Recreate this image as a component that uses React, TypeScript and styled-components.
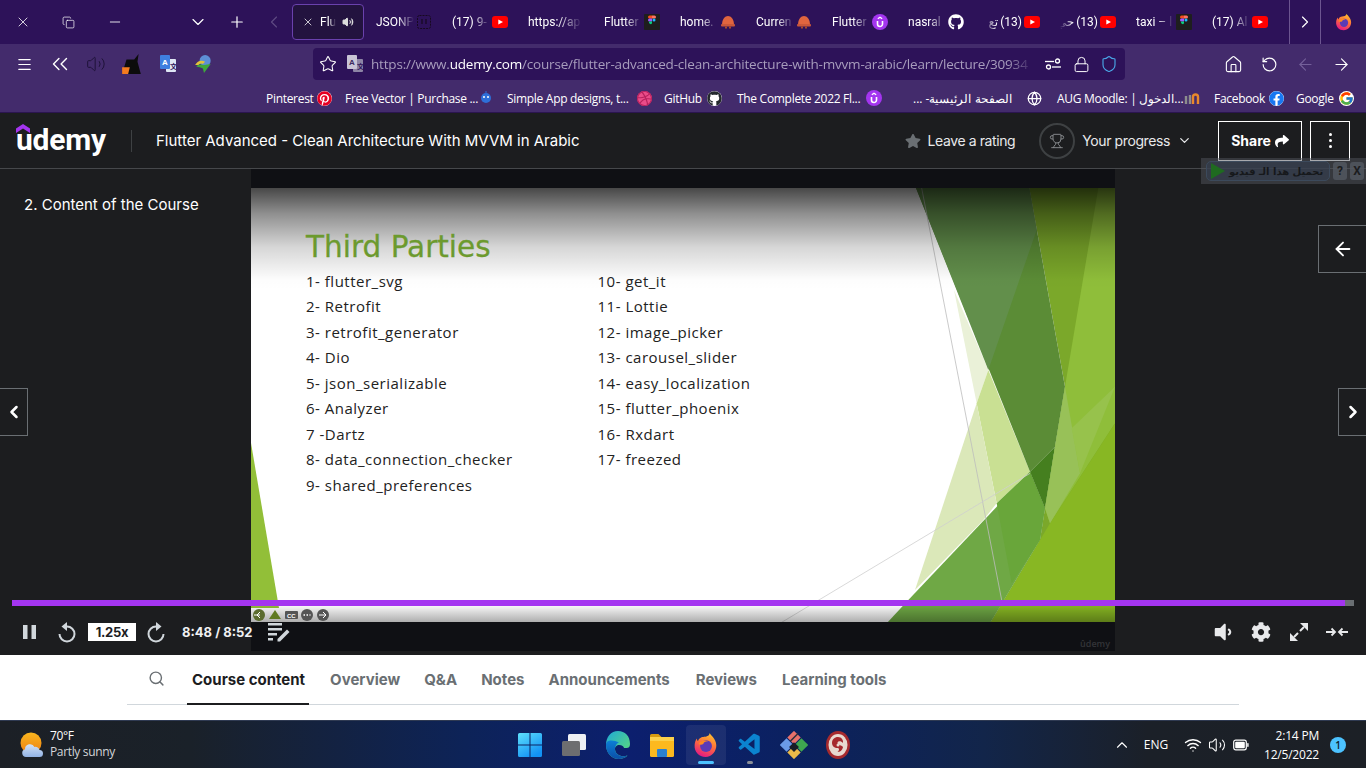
import React from "react";
import styled, { createGlobalStyle } from "styled-components";
import {
  X, Copy, Minus, ChevronDown, Plus, ChevronLeft, ChevronRight, Volume2, Menu, ChevronsLeft, Star,
  Lock, Shield, Home, RotateCcw, ArrowLeft, ArrowRight,
  Globe, Trophy, Search, Wifi, ChevronUp,
} from "lucide-react";
import { FaGithub, FaPinterest, FaFacebook, FaShare, FaStar, FaVolumeDown, FaCog } from "react-icons/fa";
import { FcGoogle } from "react-icons/fc";
import { SiDribbble } from "react-icons/si";
import { VscVscode } from "react-icons/vsc";

const Global = createGlobalStyle`
  html, body { margin: 0; padding: 0; width: 1366px; height: 768px; overflow: hidden; background: #1c1d1f; }
  * { box-sizing: border-box; }
  svg { flex: none; }
`;

const Screen = styled.div`
  width: 1366px; height: 768px; display: flex; flex-direction: column; position: relative; overflow: hidden;
  font-family: Roboto, "DejaVu Sans", sans-serif; color: #fff;
`;

/* ---------- browser tabs ---------- */
const TabBar = styled.div`height: 44px; background: #2d1259; display: flex; align-items: center; flex: none;`;
const WinSlot = styled.div<{ $w: number; $dim?: boolean }>`
  width: ${(p) => p.$w}px; height: 44px; display: flex; align-items: center; justify-content: center; flex: none;
  color: ${(p) => (p.$dim ? "#5e4a82" : "#fff")};
`;
const ActiveTab = styled.div`
  width: 72px; height: 36px; flex: none; border: 1px solid #6a41ad; border-radius: 4px; background: #23133f;
  display: flex; align-items: center; padding-left: 9px; gap: 6px; font-size: 12px; color: #fff;
`;
const TabFade = styled.span<{ $w: number; $rtl?: boolean }>`
  width: ${(p) => p.$w}px; overflow: hidden; white-space: nowrap; display: flex; flex: none; gap: 2px;
  justify-content: ${(p) => (p.$rtl ? "flex-end" : "flex-start")};
  mask-image: linear-gradient(${(p) => (p.$rtl ? "to left" : "to right")}, #000 ${(p) => (p.$rtl ? 65 : 55)}%, transparent 100%);
`;
const Tab = styled.div`
  width: 76px; height: 44px; flex: none; display: flex; align-items: center; padding-left: 12px; gap: 2px;
  font-size: 12px; color: #fff;
`;
const BarDivider = styled.div`width: 1px; height: 44px; background: #6c5590; flex: none;`;

/* ---------- nav bar ---------- */
const NavBar = styled.div`height: 40px; background: #432b6c; display: flex; align-items: center; padding-left: 16px; flex: none;`;
const NavIcon = styled.div<{ $dim?: boolean; $gap?: number }>`
  width: 16px; height: 18px; display: flex; align-items: center; justify-content: center; flex: none;
  margin-right: ${(p) => p.$gap ?? 20}px; color: ${(p) => (p.$dim ? "#74609a" : "#fff")};
`;
const UrlBar = styled.div`
  margin-left: 101px; margin-right: 100px; width: 812px; height: 32px; background: #2d1259; border-radius: 4px; flex: none;
  display: flex; align-items: center; padding-left: 4px; color: #fff;
`;
const UrlText = styled.div`
  width: 663px; margin-right: 5px; font-size: 13.5px; color: #a89dbd; white-space: nowrap; overflow: hidden; flex: none;
  font-family: "Open Sans", sans-serif; letter-spacing: -0.19px;
  mask-image: linear-gradient(to right, #000 96%, transparent 100%);
  b { font-weight: 400; color: #fff; }
`;
const UrlIcon = styled.div<{ $w?: number }>`
  width: ${(p) => p.$w ?? 28}px; display: flex; align-items: center; justify-content: center; flex: none;
`;

/* ---------- bookmarks ---------- */
const Bookmarks = styled.div`
  height: 28px; background: #432b6c; display: flex; align-items: center; justify-content: flex-end; padding-right: 12px; flex: none;
  font-size: 12px; font-family: "Open Sans", sans-serif; letter-spacing: -0.3px;
`;
const Bookmark = styled.div<{ $w: number; $ml: number }>`
  width: ${(p) => p.$w}px; margin-left: ${(p) => p.$ml}px; display: flex; align-items: center; justify-content: space-between; flex: none; white-space: nowrap;
`;
const BookSlot = styled.span`width: 16px; height: 16px; display: flex; align-items: center; justify-content: center; flex: none;`;
const RoundWhite = styled.span`display: flex; background: #fff; border-radius: 50%;`;
const RoundPink = styled.span`display: flex; background: #ea4c89; border-radius: 50%;`;

/* ---------- udemy header ---------- */
const Header = styled.div`
  height: 57px; background: #1c1d1f; border-top: 1px solid #2b1550; border-bottom: 1px solid #46484b; flex: none;
  display: flex; align-items: center; padding-left: 16px; position: relative;
`;
const Logo = styled.div`
  width: 90px; height: 44px; position: relative; flex: none; display: flex; align-items: flex-end;
  font-family: Roboto, sans-serif; font-weight: 700; font-size: 30px; line-height: 36px; letter-spacing: -0.2px; color: #fff; margin-top: 2px;
  svg { position: absolute; left: 0; top: 4px; }
  span { position: relative; top: -6px; }
`;
const HeadDivider = styled.div`width: 1px; height: 22px; background: #3e4143; margin: 0 24px 0 25px; flex: none;`;
const CourseTitle = styled.div`font-size: 15px; font-family: Inter, sans-serif; width: 500px; color: #fff; flex: none;`;
const HeadRight = styled.div`margin-left: auto; display: flex; align-items: center; padding-right: 16px; font-size: 14px; font-family: Inter, sans-serif;`;
const Rating = styled.div`display: flex; align-items: center; gap: 7px; margin-right: 24px; color: #e8e9eb; letter-spacing: -0.4px; svg { color: #6a6f73; }`;
const ProgressRing = styled.div`
  width: 36px; height: 36px; border: 2px solid #3e4143; border-radius: 50%; display: flex; align-items: center; justify-content: center; color: #8a8d90; margin-right: 7px; flex: none;
`;
const Progress = styled.div`display: flex; align-items: center; gap: 7px; margin-right: 26px; color: #e8e9eb; letter-spacing: -0.4px;`;
const ShareBtn = styled.div`
  width: 84px; height: 40px; border: 1px solid #fff; display: flex; align-items: center; justify-content: center; gap: 4px; font-weight: 700; font-size: 14px; color: #fff; margin-right: 8px;
`;
const MoreBtn = styled.div`width: 40px; height: 40px; border: 1px solid #fff; display: flex; flex-direction: column; gap: 3px; align-items: center; justify-content: center;`;
const Dot = styled.i`width: 3px; height: 3px; background: #fff; border-radius: 50%; display: block;`;
const DownloadBar = styled.div`
  position: absolute; left: 1201px; top: 158px; width: 165px; height: 26px; background: rgba(80, 84, 92, 0.5); display: flex; align-items: center; gap: 3px; padding-left: 5px; z-index: 4;
`;
const DownloadPill = styled.div`
  width: 124px; height: 20px; border: 1px solid #3c4a5c; border-radius: 5px; background: rgba(52, 62, 78, 0.65); display: flex; align-items: center; gap: 4px; padding-left: 4px;
  font-size: 10px; font-weight: 700; color: #16181b; font-family: "DejaVu Sans", sans-serif; white-space: nowrap; overflow: hidden;
`;
const DownloadKey = styled.div`width: 14px; height: 18px; background: rgba(84, 89, 98, 0.8); border-radius: 3px; color: #1c1d1f; font-size: 12px; font-weight: 700; display: flex; align-items: center; justify-content: center;`;

/* ---------- player ---------- */
const Player = styled.div`
  height: 486px; background: #1c1d1f; flex: none; position: relative; display: grid; grid-template-columns: 251px 864px 251px;
`;
const LectureName = styled.div`padding: 26px 0 0 24px; font-size: 15px; font-family: Inter, sans-serif; color: #fff;`;
const VideoCol = styled.div`background: #0f1014; height: 482px; padding-top: 19px; position: relative;`;
const Slide = styled.div`width: 864px; height: 434px; position: relative; background: #fff; padding: 41px 0 0 55px; overflow: hidden;`;
const SlideArt = styled.svg`position: absolute; left: 0; top: 0;`;
const SlideTitle = styled.div`
  position: relative; font-family: "DejaVu Sans", sans-serif; font-size: 29.5px; line-height: 36px; color: #6c9a2e; margin-bottom: 3.5px; -webkit-text-stroke: 0.3px #6c9a2e;
`;
const SlideColumns = styled.div`position: relative; display: grid; grid-template-columns: 291.5px 292px;`;
const SlideItem = styled.div`
  font-family: "Open Sans", sans-serif; font-size: 15px; line-height: 25.5px; color: #222; letter-spacing: 0.5px; white-space: nowrap;
`;
const Watermark = styled.div`
  position: absolute; right: 5px; bottom: 1px; font-size: 9px; font-weight: 600; color: #333438; font-family: "Open Sans", sans-serif;
`;
const SideBtn = styled.div<{ $left?: boolean; $top: number; $w: number; $h: number }>`
  position: absolute; ${(p) => (p.$left ? "left: 0;" : "right: 0;")}
  top: ${(p) => p.$top}px; width: ${(p) => p.$w}px; height: ${(p) => p.$h}px; border: 1px solid #6a6f73;
  ${(p) => (p.$left ? "border-left: 0;" : "border-right: 0;")}
  background: #1c1d1f; display: flex; align-items: center; justify-content: center; color: #fff; z-index: 2;
`;
const ProgressTrack = styled.div`position: absolute; left: 12px; top: 431px; width: 1342px; height: 6px; background: #6a6f73; z-index: 3;`;
const ProgressFill = styled.div`height: 6px; background: #a435f0;`;
const Controls = styled.div`
  position: absolute; left: 0; right: 0; top: 437px; height: 49px; display: flex; align-items: center; padding: 3px 10px 0 21px; color: #d1d7dc; z-index: 3;
  font-family: Inter, sans-serif;
`;
const Ctrl = styled.div<{ $w: number; $ml?: number }>`
  width: ${(p) => p.$w}px; margin-left: ${(p) => p.$ml ?? 0}px; display: flex; align-items: center; justify-content: center; flex: none;
`;
const Speed = styled.div`
  width: 48px; height: 18px; margin-left: 6px; background: #fff; color: #1c1d1f; font-size: 13px; font-weight: 700; display: flex; align-items: center; justify-content: center; flex: none; letter-spacing: -0.3px;
`;
const TimeText = styled.div`font-size: 13px; font-weight: 700; color: #f0f1f2; width: 78px; margin-left: 6px; flex: none; white-space: nowrap;`;
const CtrlSpacer = styled.div`flex: 1;`;

/* ---------- course tabs ---------- */
const TabsSection = styled.div`height: 65px; background: #fff; flex: none; padding: 0 127px;`;
const TabsRow = styled.div`height: 50px; border-bottom: 1px solid #d1d7dc; display: flex; position: relative; font-family: Inter, sans-serif;`;
const SearchSlot = styled.div`width: 60px; height: 49px; padding: 15px 0 0 21px; color: #6a6f73; flex: none;`;
const CourseTab = styled.div<{ $active?: boolean; $ml: number }>`
  margin-left: ${(p) => p.$ml}px; height: 50px; padding-top: 16px; font-size: 15px; font-weight: 700; line-height: 18px; white-space: nowrap;
  color: ${(p) => (p.$active ? "#1c1d1f" : "#6a6f73")};
  position: relative;
  ${(p) => p.$active && `&::after { content: ""; position: absolute; left: -5px; right: -4px; bottom: 0; height: 2px; background: #1c1d1f; }`}
`;

/* ---------- taskbar ---------- */
const Taskbar = styled.div`
  height: 48px; flex: none; display: flex; align-items: center; position: relative; border-top: 1px solid #2f3a52;
  background: linear-gradient(90deg, #1c2026 0%, #1a2129 14%, #0d2358 34%, #0c1f6e 46%, #0b2160 58%, #12254a 72%, #1b2028 84%, #1c2026 100%);
`;
const Weather = styled.div`display: flex; align-items: center; padding-left: 20px; gap: 6px; width: 508px; flex: none;`;
const WeatherText = styled.div`font-family: "Open Sans", sans-serif; font-size: 12px; line-height: 16px; letter-spacing: -0.35px; margin-top: -1px; span { display: block; color: #d4d6d9; }`;
const AppSlot = styled.div<{ $active?: boolean; $running?: boolean }>`
  width: ${(p) => (p.$active ? 40 : 44)}px; margin: 0 ${(p) => (p.$active ? 2 : 0)}px; height: 40px; flex: none; display: flex; align-items: center; justify-content: center; position: relative; border-radius: 4px;
  ${(p) => p.$active && `background: rgba(255,255,255,0.07);`}
  ${(p) => p.$active && `&::after { content: ""; position: absolute; left: 12px; bottom: 1px; width: 16px; height: 3px; border-radius: 2px; background: #4cc2ff; }`}
  ${(p) => p.$running && `&::after { content: ""; position: absolute; left: 19px; bottom: 1px; width: 6px; height: 3px; border-radius: 2px; background: #8a8f98; }`}
`;
const Tray = styled.div`margin-left: auto; display: flex; align-items: center; padding-right: 20px; font-family: "Open Sans", sans-serif; font-size: 12px;`;
const TrayIcon = styled.div<{ $w: number }>`width: ${(p) => p.$w}px; display: flex; justify-content: center; align-items: center; flex: none; color: #fff;`;
const Clock = styled.div`width: 56px; margin-left: 9px; text-align: right; line-height: 19px; letter-spacing: -0.2px; white-space: nowrap;`;
const Badge = styled.div`
  width: 16px; height: 16px; margin-left: 11px; border-radius: 50%; background: #4cc2ff; color: #10202c; font-size: 10px; font-weight: 600; display: flex; align-items: center; justify-content: center;
`;

/* ---------- drawn favicons ---------- */
const YT = () => (
  <svg width="16" height="12" viewBox="0 0 16 12"><rect width="16" height="12" rx="3" fill="#f00" /><path d="M6.3 3.4 11 6l-4.7 2.6z" fill="#fff" /></svg>
);
const FigmaIcon = () => (
  <svg width="16" height="16" viewBox="0 0 16 16">
    <rect width="16" height="16" fill="#1e1e1e" rx="1" />
    <path d="M5.5 1.5H8v3H5.5a1.5 1.5 0 0 1 0-3z" fill="#f24e1e" />
    <path d="M8 1.5h2.5a1.5 1.5 0 0 1 0 3H8z" fill="#ff7262" />
    <path d="M5.5 4.5H8v3H5.5a1.5 1.5 0 0 1 0-3z" fill="#a259ff" />
    <circle cx="10" cy="6" r="1.5" fill="#1abcfe" />
    <path d="M5.5 7.5H8V9a1.5 1.5 0 1 1-2.5-1.5z" fill="#0acf83" />
  </svg>
);
const UdemyBadge = () => (
  <svg width="16" height="16" viewBox="0 0 16 16">
    <circle cx="8" cy="8" r="8" fill="#a435f0" />
    <path d="M5.5 7v3a2.5 2.5 0 0 0 5 0V7" fill="none" stroke="#fff" strokeWidth="1.6" />
    <path d="M5.8 4.8 8 3.2l2.2 1.6" fill="none" stroke="#fff" strokeWidth="1.2" />
  </svg>
);
const HatIcon = () => (
  <svg width="16" height="16" viewBox="0 0 16 16">
    <path d="M2 11C2 5 5 2 8 2s6 3 6 9z" fill="#e0653f" />
    <rect x="1" y="10" width="14" height="2.5" rx="1" fill="#c9573a" />
    <path d="M5 12.5h2v2H5zM9 12.5h2v2H9z" fill="#a9482f" />
  </svg>
);
const JsonIcon = () => (
  <svg width="16" height="16" viewBox="0 0 16 16" fill="none" stroke="#17091f" strokeWidth="1">
    <rect x="1.5" y="1.5" width="13" height="13" rx="2" strokeDasharray="2 1" />
    <path d="M6 5v5M10 5v5" strokeWidth="1.2" />
  </svg>
);
const MoodleIcon = () => (
  <svg width="16" height="12" viewBox="0 0 16 12" fill="none" strokeWidth="2.400">
    <path d="M2 12V4" stroke="#8d8d8d" />
    <path d="M6 12V3" stroke="#8d8d8d" />
    <path d="M9 12V5a2.500 2.500 0 0 1 5 0v7" stroke="#e8882c" />
  </svg>
);
const FoxIcon = ({ s }: { s: number }) => (
  <svg width={s} height={s} viewBox="0 0 24 24">
    <defs>
      <linearGradient id={`fx${s}`} x1="0.7" y1="0" x2="0.3" y2="1">
        <stop offset="0" stopColor="#ffc22e" /><stop offset="0.45" stopColor="#ff7139" /><stop offset="1" stopColor="#e31587" />
      </linearGradient>
    </defs>
    <path d="M15.5 1c.6 2.4 5.5 4.500 6 11 .3 5.500-4 11-10 11S1 18.500 1.500 12c.2-2.500 1-4.500 2-6 .1 1 .5 2 1.200 2.500C5 6 7.500 4.500 9.500 4.500 12 4.500 15 4 15.500 1z" fill={`url(#fx${s})`} />
    <circle cx="12" cy="13" r="5.500" fill="#5b3bb5" />
    <path d="M5 11c2-3 6-4 9-2.500-3 0-4 1-4.500 2.500C8 12 6.500 12 5 11z" fill="#ff8a1f" />
  </svg>
);
const WeatherIcon = () => (
  <svg width="24" height="26" viewBox="0 0 24 26">
    <defs>
      <linearGradient id="sun" x1="0" y1="0" x2="0" y2="1"><stop offset="0" stopColor="#f9b61e" /><stop offset="1" stopColor="#ee7f14" /></linearGradient>
      <linearGradient id="cl" x1="0" y1="0" x2="0" y2="1"><stop offset="0" stopColor="#d4e2f6" /><stop offset="1" stopColor="#92b3e5" /></linearGradient>
    </defs>
    <circle cx="11" cy="11" r="10.500" fill="url(#sun)" />
    <path d="M6 25a4 4 0 0 1-1-7.800A5 5 0 0 1 14.500 15a4 4 0 0 1 5 3 3.500 3.500 0 0 1 0 7z" fill="url(#cl)" />
  </svg>
);
const WinLogo = () => (
  <svg width="24" height="24" viewBox="0 0 24 24">
    <defs><linearGradient id="win" x1="0" y1="0" x2="0.6" y2="1"><stop offset="0" stopColor="#5fe0fb" /><stop offset="1" stopColor="#1292f5" /></linearGradient></defs>
    <path d="M0 1.500A1.500 1.500 0 0 1 1.500 0h10v11.500H0zM12.500 0h10A1.500 1.500 0 0 1 24 1.500v10H12.500zM0 12.500h11.500V24h-10A1.500 1.500 0 0 1 0 22.500zM12.500 12.500H24v10a1.500 1.500 0 0 1-1.500 1.500h-10z" fill="url(#win)" />
  </svg>
);
const TaskView = () => (
  <svg width="24" height="22" viewBox="0 0 24 22">
    <rect x="6" y="0" width="18" height="16" rx="1.500" fill="#eef0f3" />
    <rect x="0" y="7" width="18" height="15" rx="1.500" fill="#6d6e70" />
  </svg>
);
const EdgeIcon = () => (
  <svg width="26" height="30" viewBox="0 0 26 30">
    <defs>
      <linearGradient id="ed1" x1="0" y1="0" x2="1" y2="1"><stop offset="0" stopColor="#1fa8d8" /><stop offset="1" stopColor="#62e070" /></linearGradient>
      <linearGradient id="ed2" x1="0" y1="0" x2="0" y2="1"><stop offset="0" stopColor="#0c7fd6" /><stop offset="1" stopColor="#0b4fa8" /></linearGradient>
    </defs>
    <path d="M13 1C6 1 1 7 1 15c0 8 6 14 12.500 14 4 0 7-1.500 9-3.500-5 2-12 0-12.500-6-.3-3 2-4.500 4-4.500 3 0 5 1.500 5 3h2.500c2 0 3.500-1 3.500-4C25 6 20 1 13 1z" fill="url(#ed1)" />
    <path d="M1 15c0 8 6 14 12.500 14 4 0 7-1.500 9-3.500-5 2-12 0-12.500-6C9.700 16 12 13 14 12.500 9 10 1 9 1 15z" fill="url(#ed2)" />
  </svg>
);
const FolderIcon = () => (
  <svg width="24" height="24" viewBox="0 0 24 24">
    <path d="M0 2.500A1.500 1.500 0 0 1 1.500 1h7l3 3H0z" fill="#d69a10" />
    <rect x="0" y="4" width="24" height="6" fill="#fbd04b" />
    <path d="M0 8h24v14.500a1.500 1.500 0 0 1-1.500 1.500h-21A1.500 1.500 0 0 1 0 22.500z" fill="#fcb91f" />
    <rect x="7" y="16" width="10" height="8" rx="1" fill="#2a80d1" />
  </svg>
);
const KrakenIcon = () => (
  <svg width="28" height="28" viewBox="0 0 28 28">
    <g transform="rotate(45 14 14)">
      <rect x="4" y="4" width="9.500" height="9.500" fill="#e8716b" />
      <rect x="14.500" y="4" width="9.500" height="9.500" fill="#3fa650" />
      <rect x="14.500" y="14.500" width="9.500" height="9.500" fill="#e9b949" />
      <rect x="4" y="14.500" width="9.500" height="9.500" fill="#6a9ae8" />
      <rect x="12" y="12" width="7" height="7" fill="#191d27" />
      <rect x="8" y="3" width="1.500" height="11" fill="#2b2f3a" />
    </g>
  </svg>
);
const RedRound = () => (
  <svg width="24" height="28" viewBox="0 0 24 28">
    <ellipse cx="12" cy="14" rx="12" ry="14" fill="#a62a2e" />
    <ellipse cx="12" cy="14" rx="9.500" ry="11" fill="#e8d9d0" />
    <path d="M12 6c3.500 0 5.500 3 5 6-2-2.500-5.500-2-5.500 0 0 2.500 5.500 2 5.500 4.500-1 3-3 4.500-5.500 4.500 2.500-2 1.500-4 0-4-3 0-5.500-2-5.500-5 0-3.500 2.500-6 6-6z" fill="#a62a2e" />
    <circle cx="12" cy="14" r="1.500" fill="#e8d9d0" />
  </svg>
);
const PlayDl = () => <svg width="14" height="16" viewBox="0 0 14 16"><path d="M0 0l14 8-14 8z" fill="#1f6a20" /></svg>;
const ExtBlack = () => (
  <svg width="20" height="22" viewBox="0 0 18 20">
    <path d="M4 6h7l4-5-1 7 3 11H0z" fill="#0c0c0c" />
    <path d="M0 13h7l-1.500 6H0z" fill="#f47c20" />
  </svg>
);
const ExtGlobe = () => (
  <svg width="20" height="20" viewBox="0 0 18 18">
    <circle cx="10" cy="6" r="5" fill="#5d8fd6" />
    <path d="M1 10c2-4 6-5 9-3l-2 2c-2-1-3 0-4 1z" fill="#e2c23a" />
    <path d="M2 11c2-2 5-2 7-1l6-1-6 8-1-4c-2-1-4-1-6-2z" fill="#3ea83c" />
  </svg>
);
const TranslateBadge = ({ dim }: { dim?: boolean }) => (
  <svg width="16" height="18" viewBox="0 0 16 18">
    <rect x="6" y="4" width="10" height="13" rx="1" fill={dim ? "#8d84a6" : "#dfe7f5"} />
    <rect x="0" y="0" width="10" height="14" rx="1" fill={dim ? "#c9c4d6" : "#3f7fe0"} />
    <text x="2" y="10" fontSize="8" fontWeight="700" fill={dim ? "#3c2a5e" : "#fff"} fontFamily="Liberation Sans">A</text>
    <text x="10" y="14" fontSize="7" fontWeight="700" fill="#2d1259" fontFamily="Noto Sans CJK SC">文</text>
  </svg>
);
const TwoSliders = () => (
  <svg width="16" height="12" viewBox="0 0 16 12" fill="none" stroke="#fff" strokeWidth="1.300">
    <path d="M0 3.500h9" /><circle cx="12.500" cy="3" r="2" />
    <path d="M7 9h9" /><circle cx="3.500" cy="9" r="2" />
  </svg>
);
const PauseIcon = () => (
  <svg width="13" height="14" viewBox="0 0 13 14" fill="#d1d7dc"><rect width="4.500" height="14" /><rect x="8.500" width="4.500" height="14" /></svg>
);
const ReplayIcon = ({ flip }: { flip?: boolean }) => (
  <svg width="20" height="22" viewBox="0 0 20 22" fill="none" stroke="#d1d7dc" strokeWidth="2" transform={flip ? "scale(-1 1)" : undefined}>
    <path d="M10 5.500a7.500 7.500 0 1 1-7.500 7.500" />
    <path d="M10 1 4.500 5.500 10 10z" fill="#d1d7dc" stroke="none" />
  </svg>
);
const NotesIcon = () => (
  <svg width="22" height="20" viewBox="0 0 22 20" fill="#d1d7dc">
    <rect x="0" y="1" width="14" height="2.500" /><rect x="0" y="6" width="14" height="2.500" /><rect x="0" y="11" width="9" height="2.500" /><rect x="0" y="16" width="5" height="2.500" />
    <path d="M19 7.500l2.500 2.500L12 19.500H9.500V17z" />
  </svg>
);
const Expand = () => (
  <svg width="20" height="20" viewBox="0 0 20 20" fill="#e8e9eb" stroke="#e8e9eb" strokeWidth="2">
    <path d="M11 1h8v8zM9 19H1v-8z" stroke="none" />
    <path d="M15 5l-4 4M5 15l4-4" />
  </svg>
);
const Shrink = () => (
  <svg width="22" height="12" viewBox="0 0 22 12" fill="none" stroke="#e8e9eb" strokeWidth="1.800">
    <path d="M0 6h9M5.500 2.500 9 6l-3.500 3.500M22 6h-9M16.500 2.500 13 6l3.500 3.500" />
  </svg>
);
const Battery = () => (
  <svg width="16" height="12" viewBox="0 0 16 12" fill="none">
    <rect x="0.700" y="1.200" width="12.600" height="9.600" rx="2" stroke="#fff" strokeWidth="1.200" />
    <rect x="2.200" y="2.700" width="9.600" height="6.600" rx="1" fill="#fff" />
    <rect x="14.200" y="4" width="1.400" height="4" rx="0.700" fill="#fff" />
  </svg>
);

const SlideBackground = () => (
  <SlideArt width="864" height="434" viewBox="0 0 864 434">
    <defs>
      <linearGradient id="topShade" x1="0" y1="0" x2="0" y2="1">
        <stop offset="0" stopColor="#000" stopOpacity="0.72" />
        <stop offset="0.25" stopColor="#000" stopOpacity="0.44" />
        <stop offset="0.58" stopColor="#000" stopOpacity="0.16" />
        <stop offset="0.9" stopColor="#000" stopOpacity="0.01" />
        <stop offset="1" stopColor="#000" stopOpacity="0" />
      </linearGradient>
      <linearGradient id="botShade" x1="0" y1="0" x2="0" y2="1">
        <stop offset="0" stopColor="#000" stopOpacity="0" />
        <stop offset="1" stopColor="#000" stopOpacity="0.32" />
      </linearGradient>
    </defs>
    <polygon points="0,255 28,420 0,420" fill="#92bf38" />
    <g transform="translate(629,-8) scale(0.33333)">
      <polygon points="448,24 705,24 705,1330 330,1330 480,1080 495,985 555,620" fill="#7ba82a" />
      <polygon points="655,24 705,24 705,730 510,1030 495,985 555,620" fill="#8fbe3a" />
      <polygon points="705,730 705,1330 330,1330 480,1080 510,1030" fill="#88b723" />
      <polygon points="222,330 325,570 290,670" fill="#eaf1d8" />
      <polygon points="325,570 450,875 350,970 290,670" fill="#c9e093" />
      <polygon points="290,670 350,970 310,1020 105,1230" fill="#dbe8b9" />
      <polygon points="450,875 85,1260 20,1330 330,1330 480,1080 495,985" fill="#6fa845" />
      <polygon points="350,970 450,875 495,985 480,1080 395,1210" fill="#69a63a" />
      <polygon points="108,24 448,24 555,620 525,800 450,875" fill="#5b8c36" />
      <polygon points="108,24 448,24 470,150 325,570" fill="#628f4b" />
      <polygon points="450,875 525,800 495,985" fill="#457f1f" />
      <polygon points="555,620 600,880 510,1030 495,985 525,800" fill="#98c158" />
      <polygon points="705,620 600,880 575,745" fill="#97c24c" />
      <line x1="125" y1="24" x2="365" y2="1260" stroke="#bdbdbd" strokeWidth="3" opacity="0.8" />
      <line x1="-300" y1="1330" x2="450" y2="880" stroke="#cfcfcf" strokeWidth="3" opacity="0.8" />
    </g>
    <rect x="0" y="0" width="864" height="102" fill="url(#topShade)" />
    <rect x="0" y="416" width="864" height="18" fill="url(#botShade)" />
    <g transform="translate(0,427)">
      <circle cx="8" cy="0" r="6" fill="#5b6b2f" />
      <path d="M11-3l-3 3 3 3M5 0h6" stroke="#fff" fill="none" strokeWidth="1" transform="translate(-2 0)" />
      <path d="M18 4l6-9 6 9z" fill="#5f7a22" />
      <rect x="34" y="-4" width="13" height="8" rx="1" fill="#555" />
      <text x="36" y="2.500" fontSize="6" fontWeight="700" fill="#fff" fontFamily="Liberation Sans">CC</text>
      <circle cx="56" cy="0" r="6" fill="#555" />
      <circle cx="72" cy="0" r="6" fill="#555" />
      <path d="M68 0h7M72-3l3 3-3 3" stroke="#fff" fill="none" strokeWidth="1" />
      <path d="M52.500 0h7" stroke="#fff" strokeWidth="1.500" strokeDasharray="1.500 1.500" />
    </g>
  </SlideArt>
);

const tabs: { t: string; ar?: string; w?: number; icon: React.ReactNode }[] = [
  { t: "JSONP", w: 38, icon: <JsonIcon /> },
  { t: "(17) 9-", w: 38, icon: <YT /> },
  { t: "https://ap", w: 54, icon: null },
  { t: "Flutter", w: 38, icon: <FigmaIcon /> },
  { t: "home.", w: 38, icon: <HatIcon /> },
  { t: "Curren", w: 38, icon: <HatIcon /> },
  { t: "Flutter", w: 38, icon: <UdemyBadge /> },
  { t: "nasral", w: 38, icon: <FaGithub size={16} color="#fff" /> },
  { t: "(13)", ar: "تع", w: 38, icon: <YT /> },
  { t: "(13)", ar: "حي", w: 38, icon: <YT /> },
  { t: "taxi – l", w: 38, icon: <FigmaIcon /> },
  { t: "(17) Al", w: 38, icon: <YT /> },
];

const bookmarks: { t: string; w: number; ml: number; rtl?: boolean; icon: React.ReactNode }[] = [
  { t: "Pinterest", w: 66, ml: 0, icon: <RoundWhite><FaPinterest size={15} color="#e60023" /></RoundWhite> },
  { t: "Free Vector | Purchase ...", w: 148, ml: 13, icon: <svg width="14" height="14" viewBox="0 0 14 14"><circle cx="7" cy="7" r="5" fill="#2e6fd8" /><circle cx="5" cy="6" r="1" fill="#fff" /><circle cx="9" cy="6" r="1" fill="#fff" /><path d="M7 0v2" stroke="#2e6fd8" /></svg> },
  { t: "Simple App designs, t...", w: 145, ml: 14, icon: <RoundPink><SiDribbble size={15} color="#b8225e" /></RoundPink> },
  { t: "GitHub", w: 58, ml: 12, icon: <RoundWhite><FaGithub size={15} color="#24292e" /></RoundWhite> },
  { t: "The Complete 2022 Fl...", w: 145, ml: 15, icon: <UdemyBadge /> },
  { t: "الصفحة الرئيسية- ...", w: 92, ml: 31, rtl: true, icon: null },
  { t: "", w: 16, ml: 21, icon: <Globe size={15} color="#fff" /> },
  { t: "AUG Moodle: | الدخول...", w: 142, ml: 15, icon: <MoodleIcon /> },
  { t: "Facebook", w: 70, ml: 15, icon: <RoundWhite><FaFacebook size={15} color="#1877f2" /></RoundWhite> },
  { t: "Google", w: 58, ml: 12, icon: <RoundWhite><FcGoogle size={15} /></RoundWhite> },
];

const col1 = ["1- flutter_svg", "2- Retrofit", "3- retrofit_generator", "4- Dio", "5- json_serializable", "6- Analyzer", "7 -Dartz", "8- data_connection_checker", "9- shared_preferences"];
const col2 = ["10- get_it", "11- Lottie", "12- image_picker", "13- carousel_slider", "14- easy_localization", "15- flutter_phoenix", "16- Rxdart", "17- freezed"];

const courseTabs: [string, number, boolean?][] = [
  ["Course content", 5, true], ["Overview", 25], ["Q&A", 24], ["Notes", 24], ["Announcements", 24], ["Reviews", 26], ["Learning tools", 25],
];

export default function App() {
  return (
    <Screen>
      <Global />
      <TabBar>
        <WinSlot $w={45}><X size={16} strokeWidth={1.2} /></WinSlot>
        <WinSlot $w={46}><Copy size={13} strokeWidth={1.3} /></WinSlot>
        <WinSlot $w={48}><Minus size={16} strokeWidth={1.3} /></WinSlot>
        <WinSlot $w={39} />
        <WinSlot $w={40}><ChevronDown size={20} strokeWidth={1.4} /></WinSlot>
        <WinSlot $w={38}><Plus size={18} strokeWidth={1.6} /></WinSlot>
        <WinSlot $w={36} $dim><ChevronLeft size={20} strokeWidth={1.4} /></WinSlot>
        <ActiveTab>
          <X size={12} strokeWidth={1.5} />
          <TabFade $w={16}>Flu</TabFade>
          <Volume2 size={12} fill="#ddd" color="#ddd" />
        </ActiveTab>
        {tabs.map((tab, i) => (
          <Tab key={i}>
            <TabFade $w={tab.w ?? 36} $rtl={!!tab.ar}>
              {tab.ar && <bdi>{tab.ar}</bdi>}
              <bdi>{tab.t}</bdi>
            </TabFade>
            {tab.icon}
          </Tab>
        ))}
        <WinSlot $w={13} />
        <BarDivider />
        <WinSlot $w={30}><ChevronRight size={20} strokeWidth={1.4} /></WinSlot>
        <BarDivider />
        <WinSlot $w={45}><FoxIcon s={18} /></WinSlot>
      </TabBar>

      <NavBar>
        <NavIcon><Menu size={17} strokeWidth={1.7} /></NavIcon>
        <NavIcon><ChevronsLeft size={26} strokeWidth={1.3} /></NavIcon>
        <NavIcon $dim><Volume2 size={20} color="#1e1238" strokeWidth={1.2} /></NavIcon>
        <NavIcon><ExtBlack /></NavIcon>
        <NavIcon><TranslateBadge /></NavIcon>
        <NavIcon $gap={0}><ExtGlobe /></NavIcon>
        <UrlBar>
          <UrlIcon $w={22}><Star size={18} strokeWidth={1.4} /></UrlIcon>
          <UrlIcon $w={32}><TranslateBadge dim /></UrlIcon>
          <UrlText>https://www.<b>udemy.com</b>/course/flutter-advanced-clean-architecture-with-mvvm-arabic/learn/lecture/30934</UrlText>
          <UrlIcon><TwoSliders /></UrlIcon>
          <UrlIcon><Lock size={17} strokeWidth={1.4} /></UrlIcon>
          <UrlIcon><Shield size={18} color="#4aa8e8" strokeWidth={1.5} /></UrlIcon>
        </UrlBar>
        <NavIcon><Home size={19} strokeWidth={1.4} /></NavIcon>
        <NavIcon><RotateCcw size={17} strokeWidth={1.6} /></NavIcon>
        <NavIcon $dim><ArrowLeft size={19} strokeWidth={1.4} /></NavIcon>
        <NavIcon $gap={0}><ArrowRight size={19} strokeWidth={1.4} /></NavIcon>
      </NavBar>

      <Bookmarks>
        {bookmarks.map((b) => (
          <Bookmark key={b.t || "globe"} $w={b.w} $ml={b.ml}>
            {b.t && <span dir={b.rtl ? "rtl" : undefined}>{b.t}</span>}
            {b.icon && <BookSlot>{b.icon}</BookSlot>}
          </Bookmark>
        ))}
      </Bookmarks>

      <Header>
        <Logo>
          <svg width="14" height="9" viewBox="0 0 14 9"><path d="M7 0 14 4.500V9L7 4.500 0 9V4.500z" fill="#a435f0" /></svg>
          <span>udemy</span>
        </Logo>
        <HeadDivider />
        <CourseTitle>Flutter Advanced - Clean Architecture With MVVM in Arabic</CourseTitle>
        <HeadRight>
          <Rating><FaStar size={16} />Leave a rating</Rating>
          <ProgressRing><Trophy size={16} strokeWidth={1.4} /></ProgressRing>
          <Progress>Your progress <ChevronDown size={15} strokeWidth={2} /></Progress>
          <ShareBtn>Share <FaShare size={14} /></ShareBtn>
          <MoreBtn><Dot /><Dot /><Dot /></MoreBtn>
        </HeadRight>
      </Header>

      <DownloadBar>
        <DownloadPill><PlayDl /><span>تحميل هذا الـ فيديو</span></DownloadPill>
        <DownloadKey>?</DownloadKey>
        <DownloadKey>X</DownloadKey>
      </DownloadBar>

      <Player>
        <LectureName>2. Content of the Course</LectureName>
        <VideoCol>
          <Slide>
            <SlideBackground />
            <SlideTitle>Third Parties</SlideTitle>
            <SlideColumns>
              <div>{col1.map((s) => <SlideItem key={s}>{s}</SlideItem>)}</div>
              <div>{col2.map((s) => <SlideItem key={s}>{s}</SlideItem>)}</div>
            </SlideColumns>
          </Slide>
          <Watermark>ûdemy</Watermark>
        </VideoCol>
        <div />
        <SideBtn $top={56} $w={48} $h={48}><ArrowLeft size={22} strokeWidth={2} /></SideBtn>
        <SideBtn $left $top={219} $w={28} $h={48}><ChevronLeft size={20} strokeWidth={3} /></SideBtn>
        <SideBtn $top={219} $w={28} $h={48}><ChevronRight size={20} strokeWidth={3} /></SideBtn>
        <ProgressTrack><ProgressFill style={{ width: `${(1333 / 1342) * 100}%` }} /></ProgressTrack>
        <Controls>
          <Ctrl $w={16}><PauseIcon /></Ctrl>
          <Ctrl $w={30} $ml={15}><ReplayIcon /></Ctrl>
          <Speed>1.25x</Speed>
          <Ctrl $w={40}><ReplayIcon flip /></Ctrl>
          <TimeText>8:48 / 8:52</TimeText>
          <Ctrl $w={38}><NotesIcon /></Ctrl>
          <CtrlSpacer />
          <Ctrl $w={38}><FaVolumeDown size={22} color="#e8e9eb" /></Ctrl>
          <Ctrl $w={38}><FaCog size={20} color="#e8e9eb" /></Ctrl>
          <Ctrl $w={38}><Expand /></Ctrl>
          <Ctrl $w={38}><Shrink /></Ctrl>
        </Controls>
      </Player>

      <TabsSection>
        <TabsRow>
          <SearchSlot><Search size={17} strokeWidth={2} /></SearchSlot>
          {courseTabs.map(([t, ml, a]) => <CourseTab key={t} $ml={ml} $active={a}>{t}</CourseTab>)}
        </TabsRow>
      </TabsSection>

      <Taskbar>
        <Weather>
          <WeatherIcon />
          <WeatherText>70°F<span>Partly sunny</span></WeatherText>
        </Weather>
        <AppSlot><WinLogo /></AppSlot>
        <AppSlot><TaskView /></AppSlot>
        <AppSlot><EdgeIcon /></AppSlot>
        <AppSlot><FolderIcon /></AppSlot>
        <AppSlot $active><FoxIcon s={26} /></AppSlot>
        <AppSlot $running><VscVscode size={26} color="#0b84d0" /></AppSlot>
        <AppSlot><KrakenIcon /></AppSlot>
        <AppSlot><RedRound /></AppSlot>
        <Tray>
          <TrayIcon $w={20}><ChevronUp size={18} strokeWidth={1.5} /></TrayIcon>
          <TrayIcon $w={48}>ENG</TrayIcon>
          <TrayIcon $w={26}><Wifi size={18} strokeWidth={1.8} /></TrayIcon>
          <TrayIcon $w={22}><Volume2 size={18} strokeWidth={1.4} /></TrayIcon>
          <TrayIcon $w={26}><Battery /></TrayIcon>
          <Clock>2:14 PM<br />12/5/2022</Clock>
          <Badge>1</Badge>
        </Tray>
      </Taskbar>
    </Screen>
  );
}
